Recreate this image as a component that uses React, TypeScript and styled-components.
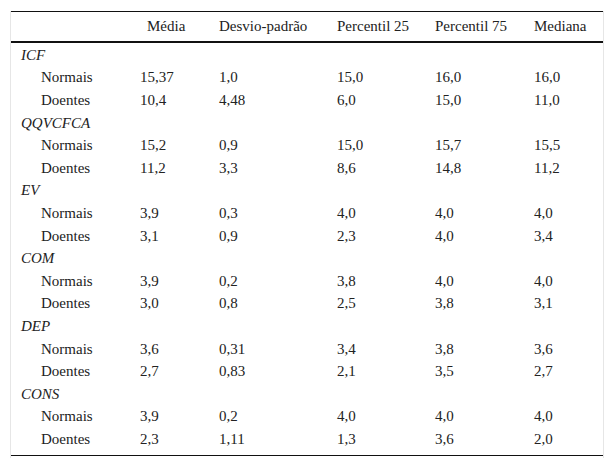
import React, { FC } from 'react'
import styled, { createGlobalStyle } from 'styled-components'

const GlobalStyle = createGlobalStyle`
  html, body {
    margin: 0;
    padding: 0;
    background: #fff;
    font-family: "Liberation Serif", "DejaVu Serif", serif;
  }
`

interface Group {
  name: string
  rows: { label: string; values: string[] }[]
}

const headers = ['Média', 'Desvio-padrão', 'Percentil 25', 'Percentil 75', 'Mediana']

const groups: Group[] = [
  {
    name: 'ICF',
    rows: [
      { label: 'Normais', values: ['15,37', '1,0', '15,0', '16,0', '16,0'] },
      { label: 'Doentes', values: ['10,4', '4,48', '6,0', '15,0', '11,0'] }
    ]
  },
  {
    name: 'QQVCFCA',
    rows: [
      { label: 'Normais', values: ['15,2', '0,9', '15,0', '15,7', '15,5'] },
      { label: 'Doentes', values: ['11,2', '3,3', '8,6', '14,8', '11,2'] }
    ]
  },
  {
    name: 'EV',
    rows: [
      { label: 'Normais', values: ['3,9', '0,3', '4,0', '4,0', '4,0'] },
      { label: 'Doentes', values: ['3,1', '0,9', '2,3', '4,0', '3,4'] }
    ]
  },
  {
    name: 'COM',
    rows: [
      { label: 'Normais', values: ['3,9', '0,2', '3,8', '4,0', '4,0'] },
      { label: 'Doentes', values: ['3,0', '0,8', '2,5', '3,8', '3,1'] }
    ]
  },
  {
    name: 'DEP',
    rows: [
      { label: 'Normais', values: ['3,6', '0,31', '3,4', '3,8', '3,6'] },
      { label: 'Doentes', values: ['2,7', '0,83', '2,1', '3,5', '2,7'] }
    ]
  },
  {
    name: 'CONS',
    rows: [
      { label: 'Normais', values: ['3,9', '0,2', '4,0', '4,0', '4,0'] },
      { label: 'Doentes', values: ['2,3', '1,11', '1,3', '3,6', '2,0'] }
    ]
  }
]

const colWidths = [129, 79, 118, 98, 99, 69]

const Wrapper = styled.div`
  margin: 11px 10px 0;
  width: 592px;
  border-left: 1px solid #e6e6e6;
  border-right: 1px solid #e6e6e6;
  padding-bottom: 2px;
`

const Table = styled.table`
  width: 592px;
  border-collapse: collapse;
  table-layout: fixed;
  font-family: "Liberation Serif", "DejaVu Serif", serif;
  font-size: 15px;
  color: #222;
`

const Head = styled.thead`
  border-top: 1px solid #111;
  border-bottom: 2px solid #111;
`

const HeadCell = styled.th<{ $shift?: number }>`
  height: 29px;
  padding: 0 0 0 ${(p) => p.$shift || 0}px;
  text-align: left;
  font-weight: normal;
  vertical-align: middle;
`

const Body = styled.tbody`
  border-bottom: 1px solid #111;

  tr:first-child td {
    padding-top: 1px;
  }

  tr:last-child td {
    padding-bottom: 4px;
  }
`

const Cell = styled.td<{ $indent?: number }>`
  height: 22.6px;
  padding: 0 0 0 ${(p) => p.$indent || 0}px;
  text-align: left;
  vertical-align: middle;
  white-space: nowrap;
`

const GroupName = styled.td`
  height: 22.6px;
  padding: 0 0 0 10px;
  font-style: italic;
  text-align: left;
  vertical-align: middle;
`

const App: FC = () => (
  <>
    <GlobalStyle />
    <Wrapper>
      <Table>
        <colgroup>
          {colWidths.map((w, i) => (
            <col key={i} style={{ width: w }} />
          ))}
        </colgroup>
        <Head>
          <tr>
            <HeadCell />
            {headers.map((h, i) => (
              <HeadCell key={h} $shift={i === 0 ? 7 : 0}>
                {h}
              </HeadCell>
            ))}
          </tr>
        </Head>
        <Body>
          {groups.map((g) => (
            <React.Fragment key={g.name}>
              <tr>
                <GroupName colSpan={6}>{g.name}</GroupName>
              </tr>
              {g.rows.map((r) => (
                <tr key={g.name + r.label}>
                  <Cell $indent={30}>{r.label}</Cell>
                  {r.values.map((v, i) => (
                    <Cell key={i}>{v}</Cell>
                  ))}
                </tr>
              ))}
            </React.Fragment>
          ))}
        </Body>
      </Table>
    </Wrapper>
  </>
)

export default App
